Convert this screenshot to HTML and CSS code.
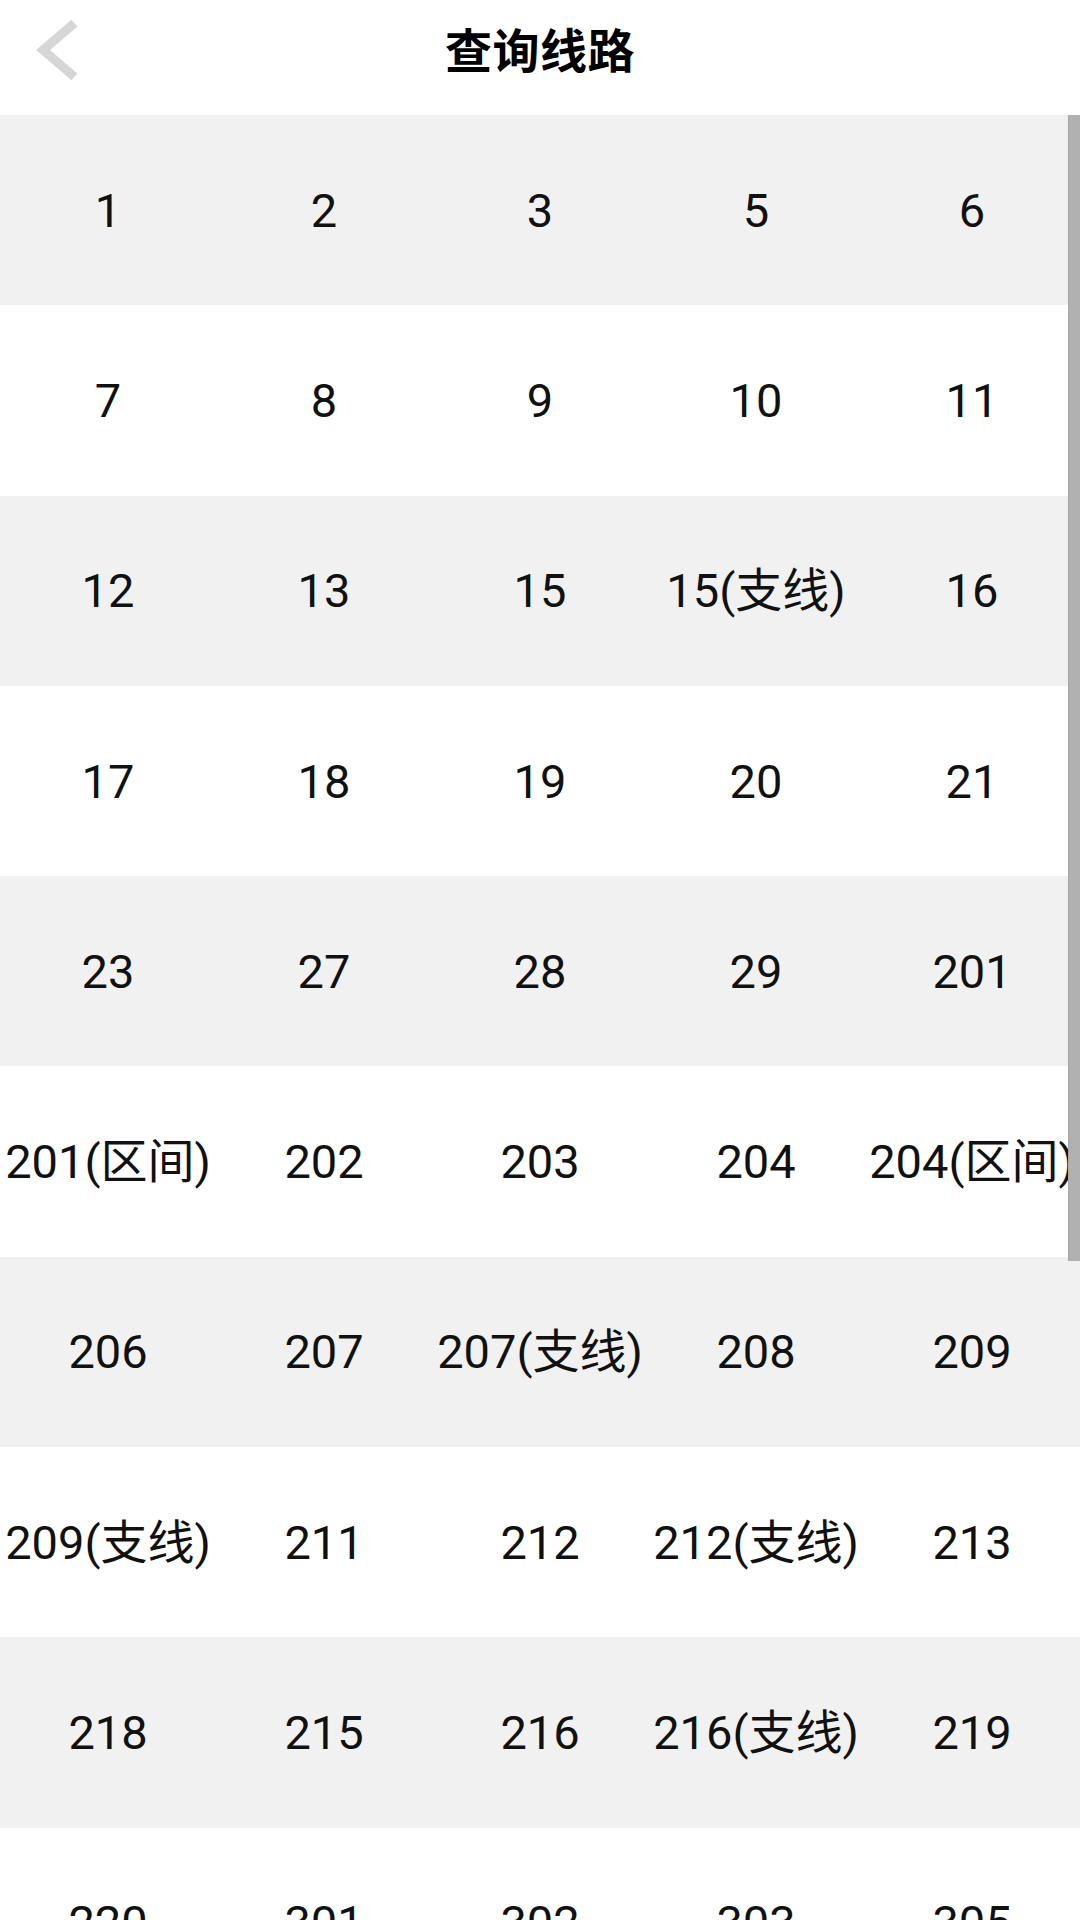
FILE: index.html
```html
<!DOCTYPE html>
<html lang="zh-CN">
<head>
<meta charset="utf-8">
<title>查询线路</title>
<link rel="stylesheet" href="styles.css">
</head>
<body>
<div class="screen">
  <header class="topbar">
    <button class="back" aria-label="返回">
      <svg width="60" height="70" viewBox="0 0 60 70">
        <polyline points="39,7 11,31 39,55" fill="none" stroke="#d6d6d6" stroke-width="9" stroke-linecap="square" stroke-linejoin="miter"/>
      </svg>
    </button>
    <h1 class="title">查询线路</h1>
  </header>

  <main class="list">
    <div class="row"><span>1</span><span>2</span><span>3</span><span>5</span><span>6</span></div>
    <div class="row"><span>7</span><span>8</span><span>9</span><span>10</span><span>11</span></div>
    <div class="row"><span>12</span><span>13</span><span>15</span><span>15(支线)</span><span>16</span></div>
    <div class="row"><span>17</span><span>18</span><span>19</span><span>20</span><span>21</span></div>
    <div class="row"><span>23</span><span>27</span><span>28</span><span>29</span><span>201</span></div>
    <div class="row"><span>201(区间)</span><span>202</span><span>203</span><span>204</span><span>204(区间)</span></div>
    <div class="row"><span>206</span><span>207</span><span>207(支线)</span><span>208</span><span>209</span></div>
    <div class="row"><span>209(支线)</span><span>211</span><span>212</span><span>212(支线)</span><span>213</span></div>
    <div class="row"><span>218</span><span>215</span><span>216</span><span>216(支线)</span><span>219</span></div>
    <div class="row"><span>220</span><span>301</span><span>302</span><span>303</span><span>305</span></div>
  </main>

  <div class="scrollbar"></div>
</div>
</body>
</html>
```

FILE: styles.css
```css
html, body {
  margin: 0;
  padding: 0;
  background: #ffffff;
}

body {
  width: 1080px;
  height: 1920px;
  overflow: hidden;
  font-family: Roboto, "Noto Sans CJK SC", sans-serif;
  color: #111111;
}

.screen {
  position: relative;
  width: 1080px;
  height: 1920px;
  overflow: hidden;
}

/* top navigation bar */
.topbar {
  height: 115px;
  display: flex;
  align-items: center;
  justify-content: center;
  position: relative;
  background: #ffffff;
}

.back {
  position: absolute;
  left: 32px;
  top: 19px;
  width: 60px;
  height: 70px;
  padding: 0;
  border: 0;
  background: transparent;
}

.back svg {
  display: block;
}

.title {
  margin: 0 0 20px 0;
  font-family: "Noto Sans CJK SC", sans-serif;
  font-size: 47px;
  font-weight: 700;
  line-height: 1;
  color: #000000;
  letter-spacing: 0.5px;
}

/* route grid */
.list {
  display: flex;
  flex-direction: column;
}

.row {
  display: grid;
  grid-template-columns: repeat(5, 1fr);
  align-items: center;
  height: 190.3px;
  flex: none;
  font-size: 47px;
  line-height: 1;
  text-align: center;
  white-space: nowrap;
}

.row:nth-child(odd) {
  background: #f1f1f1;
}

.row:nth-child(even) {
  background: #ffffff;
}

.row span {
  display: block;
}

/* list scroll indicator */
.scrollbar {
  position: absolute;
  top: 115px;
  right: 0;
  width: 12px;
  height: 1146px;
  background: #b1b1b1;
  border-left: 1px solid #a6a6a6;
  box-sizing: border-box;
}
```
